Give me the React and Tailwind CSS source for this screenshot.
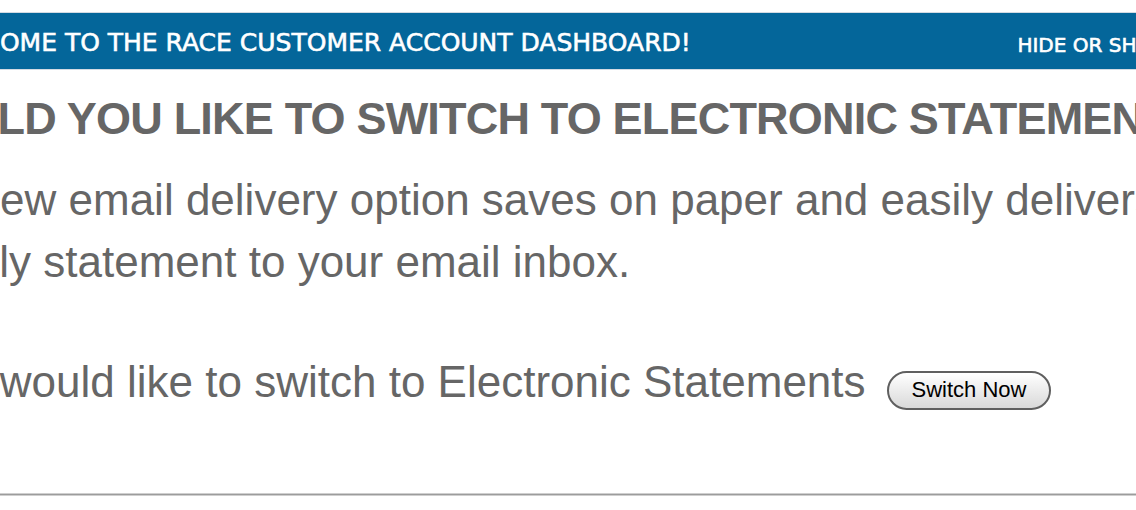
export default function App() {
  return (
    <div className="w-[1136px] h-[510px] overflow-hidden bg-white">
      <div className="w-[1320px] -ml-[110px]">
        <header className="mt-[12px] h-[58px] border-y border-[#d3dbe3] bg-[#04669a] flex items-baseline justify-between pl-[38px] pr-[38px] pt-[15px] text-white font-['DejaVu_Sans',sans-serif] uppercase whitespace-nowrap [-webkit-text-stroke:0.6px_#ffffff]">
          <div className="text-[25px] leading-[29px]">Welcome to the Race Customer Account Dashboard!</div>
          <button className="text-[20px] leading-[23px] relative top-[1px] uppercase">Hide or Show</button>
        </header>

        <main className="font-['Liberation_Sans',Arial,sans-serif] text-[#666666] whitespace-nowrap">
          <h1 className="mt-[26px] text-[45px] leading-[45px] font-bold tracking-[-0.8px] uppercase">
            Would you like to switch to Electronic Statements?
          </h1>

          <p className="mt-[28px] text-[44px] leading-[62px]">
            <span className="block">Our new email delivery option saves on paper and easily delivers your</span>
            <span className="block -ml-[13px]">monthly statement to your email inbox.</span>
          </p>

          <p className="mt-[59px] -ml-[10px] text-[44px] leading-[60px]">
            If you would like to switch to Electronic Statements
            <button className="ml-[21px] h-[39px] px-[23px] inline-flex items-center align-baseline rounded-full border-2 border-[#5f5f5f] bg-gradient-to-b from-white to-[#d9d9d9] text-[22px] text-black">
              Switch Now
            </button>
          </p>

          <div className="mt-[81px] h-[3px] border-y border-[#cfcfcf] bg-[#9c9c9c]" />
        </main>
      </div>
    </div>
  );
}
